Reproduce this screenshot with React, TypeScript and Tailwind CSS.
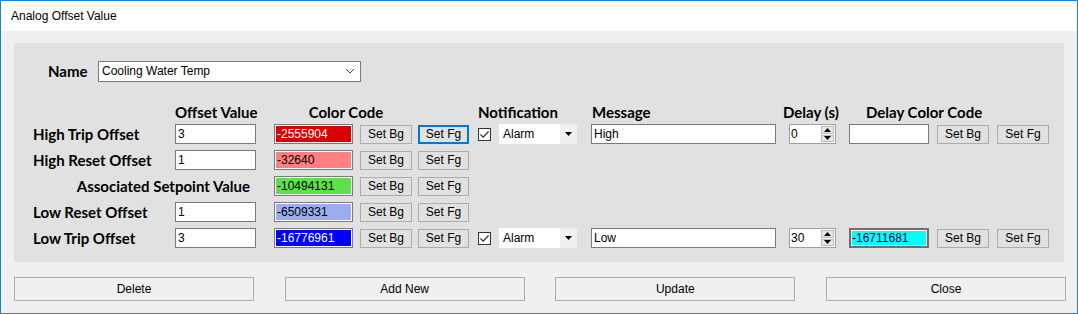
import React from "react";

const inputCls =
  "h-[20px] border border-[#7a7a7a] bg-white px-[2px] flex items-center text-[12px] text-black";

const btnCls =
  "h-[19px] border border-[#adadad] bg-[#e1e1e1] flex items-center justify-center text-[12px] text-black";

const ColorField = ({
  value,
  bg,
  fg,
  w = "w-[79px]",
}: {
  value: string;
  bg: string;
  fg: string;
  w?: string;
}) => (
  <div className={`h-[20px] ${w} border border-[#7a7a7a] bg-white p-[1px]`}>
    <div className={`h-full w-full ${bg} ${fg} flex items-center px-[1px] text-[12px]`}>
      {value}
    </div>
  </div>
);

const CheckBox = () => (
  <div className="w-[13px] h-[13px] border border-[#333] bg-white flex items-center justify-center">
    <svg width="11" height="11" viewBox="0 0 11 11">
      <path d="M1.5 5.5 L4.2 8.2 L9.5 2.5" stroke="#333" strokeWidth="1.2" fill="none" />
    </svg>
  </div>
);

const AlarmSelect = () => (
  <div className="h-[20px] w-[78px] bg-white flex items-center text-[12px] text-black">
    <span className="flex-1 pl-[4px]">Alarm</span>
    <div className="w-[17px] h-full bg-[#f0f0f0] flex items-center justify-center">
      <svg width="7" height="4" viewBox="0 0 7 4">
        <path d="M0 0 L7 0 L3.5 4 Z" fill="#000" />
      </svg>
    </div>
  </div>
);

const Spinner = ({ value }: { value: string }) => (
  <div className="h-[20px] w-[47px] border border-[#a0a0a0] bg-white flex text-[12px] text-black">
    <span className="flex-1 pl-[1px] flex items-center">{value}</span>
    <div className="w-[15px] flex flex-col p-[1px] gap-[1px]">
      <div className="flex-1 bg-[#e6e6e6] border border-[#bcbcbc] flex items-center justify-center">
        <svg width="7" height="4" viewBox="0 0 7 4">
          <path d="M0 4 L7 4 L3.5 0 Z" fill="#000" />
        </svg>
      </div>
      <div className="flex-1 bg-[#e6e6e6] border border-[#bcbcbc] flex items-center justify-center">
        <svg width="7" height="4" viewBox="0 0 7 4">
          <path d="M0 0 L7 0 L3.5 4 Z" fill="#000" />
        </svg>
      </div>
    </div>
  </div>
);

interface Row {
  label: string;
  offset?: string;
  color: string;
  bg: string;
  fg: string;
  notify?: { message: string; delay: string; delayColor?: string };
}

const rows: Row[] = [
  { label: "High Trip Offset", offset: "3", color: "-2555904", bg: "bg-[#d90000]", fg: "text-white", notify: { message: "High", delay: "0" } },
  { label: "High Reset Offset", offset: "1", color: "-32640", bg: "bg-[#ff8080]", fg: "text-black" },
  { label: "Associated Setpoint Value", color: "-10494131", bg: "bg-[#5fdf4d]", fg: "text-black" },
  { label: "Low Reset Offset", offset: "1", color: "-6509331", bg: "bg-[#9caced]", fg: "text-black" },
  { label: "Low Trip Offset", offset: "3", color: "-16776961", bg: "bg-[#0000ff]", fg: "text-white", notify: { message: "Low", delay: "30", delayColor: "-16711681" } },
];

const App = () => {
  return (
    <div className="w-[1078px] h-[314px] border border-[#1883d7] bg-[#f0f0f0] flex flex-col font-['Liberation_Sans',Arial,sans-serif] text-black">
      <div className="h-[30px] bg-white pl-[10px] flex items-center text-[12px]">
        Analog Offset Value
      </div>
      <div className="flex-1 px-[13px] pt-[12px]">
        <div className="h-[219px] bg-[#e1e1e1] pt-[18px] font-['Lato',sans-serif]">
          <div className="h-[20px] flex items-center pl-[34px]">
            <span className="w-[50px] text-[15px] font-bold">Name</span>
            <div className="h-[21px] w-[263px] border border-[#7a7a7a] bg-white flex items-center text-[12px] font-['Liberation_Sans',Arial,sans-serif]">
              <span className="flex-1 pl-[3px]">Cooling Water Temp</span>
              <svg width="10" height="6" viewBox="0 0 10 6" className="mr-[5px]">
                <path d="M1 1 L5 5 L9 1" stroke="#444" strokeWidth="1" fill="none" />
              </svg>
            </div>
          </div>

          <div className="mt-[21px] h-[20px] flex items-center text-[15px] font-bold">
            <span className="w-[161px]" />
            <span className="w-[81px] text-center whitespace-nowrap">Offset Value</span>
            <span className="ml-[18px] w-[144px] text-center">Color Code</span>
            <span className="ml-[60px] w-[114px]">Notification</span>
            <span className="w-[191px]">Message</span>
            <span className="w-[83px]">Delay (s)</span>
            <span>Delay Color Code</span>
          </div>

          <div className="mt-[2px] flex flex-col gap-[6px]">
            {rows.map((r, i) => (
              <div key={r.label} className="h-[20px] flex items-center">
                {r.offset !== undefined ? (
                  <>
                    <span className="w-[161px] pl-[19px] text-[15px] font-bold">{r.label}</span>
                    <div className={`${inputCls} w-[81px] font-['Liberation_Sans',Arial,sans-serif]`}>{r.offset}</div>
                  </>
                ) : (
                  <span className="w-[242px] pr-[6px] text-right text-[15px] font-bold">{r.label}</span>
                )}
                <div className="ml-[18px] flex items-center font-['Liberation_Sans',Arial,sans-serif]">
                  <ColorField value={r.color} bg={r.bg} fg={r.fg} />
                  <div className={`${btnCls} ml-[7px] w-[52px]`}>Set Bg</div>
                  <div
                    className={
                      i === 0
                        ? "ml-[6px] w-[51px] h-[19px] border-2 border-[#0078d7] bg-[#e1e1e1] flex items-center justify-center text-[12px]"
                        : `${btnCls} ml-[6px] w-[51px]`
                    }
                  >
                    Set Fg
                  </div>
                  {r.notify && (
                    <>
                      <div className="ml-[9px]">
                        <CheckBox />
                      </div>
                      <div className="ml-[8px]">
                        <AlarmSelect />
                      </div>
                      <div className={`${inputCls} ml-[14px] w-[185px]`}>{r.notify.message}</div>
                      <div className="ml-[13px]">
                        <Spinner value={r.notify.delay} />
                      </div>
                      <div className="ml-[13px]">
                        {r.notify.delayColor ? (
                          <div className="h-[20px] w-[80px] border-2 border-[#6f6f6f] bg-white p-[1px]">
                            <div className="h-full w-full bg-[#00ffff] text-[#000033] flex items-center text-[12px]">
                              {r.notify.delayColor}
                            </div>
                          </div>
                        ) : (
                          <div className={`${inputCls} w-[80px]`} />
                        )}
                      </div>
                      <div className={`${btnCls} ml-[8px] w-[52px]`}>Set Bg</div>
                      <div className={`${btnCls} ml-[8px] w-[52px]`}>Set Fg</div>
                    </>
                  )}
                </div>
              </div>
            ))}
          </div>
        </div>

        <div className="mt-[15px] flex justify-between w-[1052px] text-[12px]">
          {["Delete", "Add New", "Update", "Close"].map((b) => (
            <div
              key={b}
              className="h-[24px] w-[240px] border border-[#adadad] bg-[#f0f0f0] flex items-center justify-center"
            >
              {b}
            </div>
          ))}
        </div>
      </div>
    </div>
  );
};

export default App;
